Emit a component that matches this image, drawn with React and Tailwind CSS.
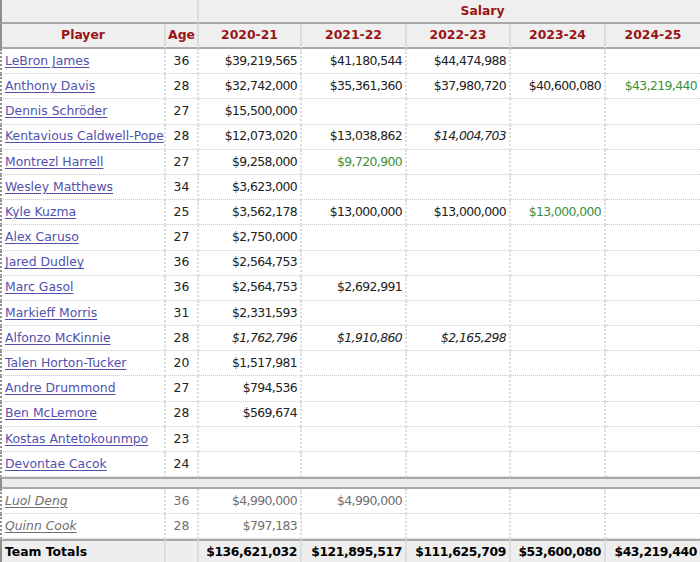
import React from "react";

const players = [
  { n: "LeBron James", a: 36, s: [["$39,219,565"], ["$41,180,544"], ["$44,474,988"], null, null] },
  { n: "Anthony Davis", a: 28, s: [["$32,742,000"], ["$35,361,360"], ["$37,980,720"], ["$40,600,080"], ["$43,219,440", "g"]] },
  { n: "Dennis Schröder", a: 27, s: [["$15,500,000"], null, null, null, null] },
  { n: "Kentavious Caldwell-Pope", a: 28, s: [["$12,073,020"], ["$13,038,862"], ["$14,004,703", "i"], null, null] },
  { n: "Montrezl Harrell", a: 27, s: [["$9,258,000"], ["$9,720,900", "g"], null, null, null] },
  { n: "Wesley Matthews", a: 34, s: [["$3,623,000"], null, null, null, null] },
  { n: "Kyle Kuzma", a: 25, s: [["$3,562,178"], ["$13,000,000"], ["$13,000,000"], ["$13,000,000", "g"], null] },
  { n: "Alex Caruso", a: 27, s: [["$2,750,000"], null, null, null, null] },
  { n: "Jared Dudley", a: 36, s: [["$2,564,753"], null, null, null, null] },
  { n: "Marc Gasol", a: 36, s: [["$2,564,753"], ["$2,692,991"], null, null, null] },
  { n: "Markieff Morris", a: 31, s: [["$2,331,593"], null, null, null, null] },
  { n: "Alfonzo McKinnie", a: 28, s: [["$1,762,796", "i"], ["$1,910,860", "i"], ["$2,165,298", "i"], null, null] },
  { n: "Talen Horton-Tucker", a: 20, s: [["$1,517,981"], null, null, null, null] },
  { n: "Andre Drummond", a: 27, s: [["$794,536"], null, null, null, null] },
  { n: "Ben McLemore", a: 28, s: [["$569,674"], null, null, null, null] },
  { n: "Kostas Antetokounmpo", a: 23, s: [null, null, null, null, null] },
  { n: "Devontae Cacok", a: 24, s: [null, null, null, null, null] },
];

const dead = [
  { n: "Luol Deng", a: 36, s: ["$4,990,000", "$4,990,000", null, null, null] },
  { n: "Quinn Cook", a: 28, s: ["$797,183", null, null, null, null] },
];

const totals = ["$136,621,032", "$121,895,517", "$111,625,709", "$53,600,080", "$43,219,440"];
const years = ["2020-21", "2021-22", "2022-23", "2023-24", "2024-25"];

const font = { fontFamily: '"DejaVu Sans", Verdana, sans-serif' };

export default function App() {
  return (
    <div className="w-[700px] h-[562px] overflow-hidden bg-white" style={font}>
      <table className="table-fixed w-[700px] border-separate border-spacing-0 text-[12.4px] text-[#222]">
        <colgroup>
          <col className="w-[166px]" />
          <col className="w-[33px]" />
          <col className="w-[103px]" />
          <col className="w-[105px]" />
          <col className="w-[104px]" />
          <col className="w-[95px]" />
          <col className="w-[94px]" />
        </colgroup>
        <thead>
          <tr className="h-[24px]">
            <th colSpan={2} className="bg-[#efefef] border-l-2 border-l-[#8f8f8f] border-r-2 border-r-[#dcdcdc] border-b-2 border-b-[#a8a8a8]"></th>
            <th colSpan={5} className="bg-[#efefef] border-b-2 border-b-[#a8a8a8] text-[#9a1414] font-bold text-center pl-[66px] pt-[1px]">
              Salary
            </th>
          </tr>
          <tr className="h-[25px]">
            <th className="bg-[#efefef] border-l-2 border-l-[#8f8f8f] border-r-2 border-r-[#dcdcdc] border-b-2 border-b-[#a8a8a8] text-[#9a1414] font-bold text-center">
              Player
            </th>
            <th className="bg-[#efefef] border-r-2 border-r-[#dcdcdc] border-b-2 border-b-[#a8a8a8] text-[#9a1414] font-bold text-center">
              Age
            </th>
            {years.map((y, i) => (
              <th
                key={y}
                className={
                  "bg-[#efefef] border-b-2 border-b-[#a8a8a8] text-[#9a1414] font-bold text-center " +
                  (i < 4 ? "border-r-2 border-r-[#dcdcdc]" : "")
                }
              >
                {y}
              </th>
            ))}
          </tr>
        </thead>
        <tbody>
          {players.map((p) => (
            <tr key={p.n} className="h-[25.2px]">
              <td className="border-l-2 border-l-[#8f8f8f] border-r-2 border-r-[#dcdcdc] border-b border-dotted border-b-[#c8c8c8] pl-[3px] whitespace-nowrap overflow-hidden">
                <a href="#" className="text-[#5151ad] underline underline-offset-2">
                  {p.n}
                </a>
              </td>
              <td className="border-r-2 border-r-[#dcdcdc] border-b border-dotted border-b-[#c8c8c8] text-center">
                {p.a}
              </td>
              {p.s.map((v, i) => (
                <td
                  key={i}
                  className={
                    "border-b border-dotted border-b-[#c8c8c8] text-right pr-[3px] tracking-[-0.6px] whitespace-nowrap " +
                    (i < 4 ? "border-r-2 border-r-[#dcdcdc] " : "") +
                    (v && v[1] === "g" ? "text-[#3d8f3a] " : "") +
                    (v && v[1] === "i" ? "italic " : "")
                  }
                >
                  {v ? v[0] : ""}
                </td>
              ))}
            </tr>
          ))}
          <tr className="h-[12px]">
            <td colSpan={7} className="p-0 h-[12px] bg-[#ececec] border-l-2 border-l-[#8f8f8f] border-t-2 border-t-[#a8a8a8] border-b-2 border-b-[#a8a8a8]"></td>
          </tr>
          {dead.map((p) => (
            <tr key={p.n} className="h-[25px] text-[#6f6f6f]">
              <td className="border-l-2 border-l-[#8f8f8f] border-r-2 border-r-[#dcdcdc] border-b border-dotted border-b-[#c8c8c8] pl-[3px] whitespace-nowrap">
                <a href="#" className="text-[#6f6f6f] italic underline underline-offset-2">
                  {p.n}
                </a>
              </td>
              <td className="border-r-2 border-r-[#dcdcdc] border-b border-dotted border-b-[#c8c8c8] text-center">
                {p.a}
              </td>
              {p.s.map((v, i) => (
                <td
                  key={i}
                  className={
                    "border-b border-dotted border-b-[#c8c8c8] text-right pr-[3px] tracking-[-0.6px] whitespace-nowrap " +
                    (i < 4 ? "border-r-2 border-r-[#dcdcdc]" : "")
                  }
                >
                  {v || ""}
                </td>
              ))}
            </tr>
          ))}
          <tr className="h-[24px] bg-[#eeeeee] text-black font-bold">
            <td className="border-l-2 border-l-[#8f8f8f] border-r-2 border-r-[#dcdcdc] border-t-2 border-t-[#a8a8a8] pl-[3px] whitespace-nowrap">
              Team Totals
            </td>
            <td className="border-r-2 border-r-[#dcdcdc] border-t-2 border-t-[#a8a8a8]"></td>
            {totals.map((t, i) => (
              <td
                key={i}
                className={
                  "border-t-2 border-t-[#a8a8a8] text-right pr-[3px] whitespace-nowrap tracking-[-0.4px] " +
                  (i < 4 ? "border-r-2 border-r-[#dcdcdc]" : "")
                }
              >
                {t}
              </td>
            ))}
          </tr>
        </tbody>
      </table>
    </div>
  );
}
